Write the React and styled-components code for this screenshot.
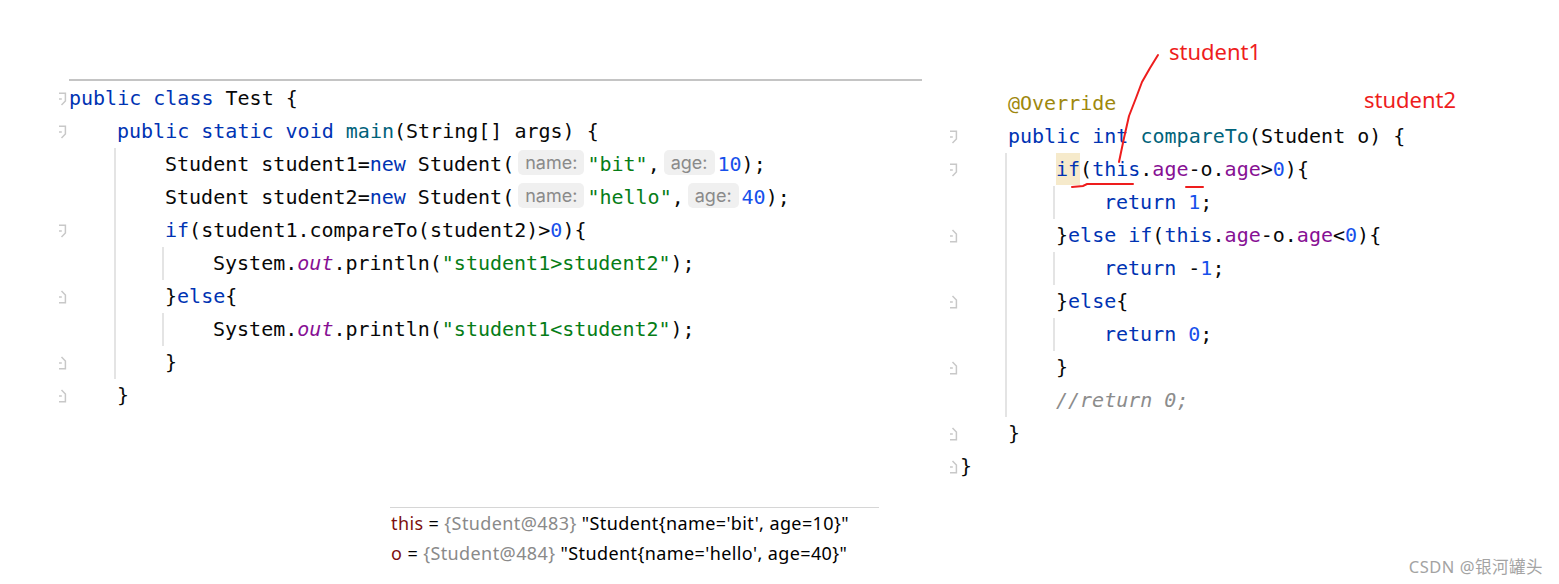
import React from 'react';
import styled, { createGlobalStyle } from 'styled-components';

const GlobalStyle = createGlobalStyle`
  html, body { margin: 0; padding: 0; background: #ffffff; }
`;

const Page = styled.div`
  position: relative;
  width: 1559px;
  height: 584px;
  overflow: hidden;
  background: #ffffff;
  display: flex;
  flex-direction: column;
`;

const TopRow = styled.div`
  display: flex;
  align-items: flex-start;
`;

const Panel = styled.div`
  display: flex;
  margin-left: ${p => p.$left}px;
  margin-top: ${p => p.$top}px;
`;

const Gutter = styled.div`
  width: 12px;
  display: flex;
  flex-direction: column;
  padding-top: ${p => p.$pad || 0}px;
`;

const GutterCell = styled.div`
  height: 33px;
  display: flex;
  align-items: center;
  justify-content: flex-end;
  padding-right: 2px;
`;

const CodeColumn = styled.div`
  width: ${p => p.$width ? `${p.$width}px` : 'auto'};
  border-top: ${p => p.$ruled ? '2px solid #c4c4c4' : 'none'};
  padding-top: ${p => p.$pad || 0}px;
  font-family: "DejaVu Sans Mono", "Liberation Mono", monospace;
  font-size: 20px;
  color: #080808;
`;

const Line = styled.div`
  height: 33px;
  line-height: 33px;
  white-space: pre;
`;

const Block = styled.div`
  ${p => p.$guide
    ? 'margin-left: -3px; border-left: 2px solid #e4e4e4; padding-left: 49px;'
    : 'padding-left: 48px;'}
`;

const Kw = styled.span`color: #0033b3;`;
const Fn = styled.span`color: #00627a;`;
const Str = styled.span`color: #067d17;`;
const Num = styled.span`color: #1750eb;`;
const Field = styled.span`
  color: #871094;
  font-style: ${p => p.$italic ? 'italic' : 'normal'};
`;
const Ann = styled.span`color: #9e880d;`;
const Comment = styled.span`
  color: #8c8c8c;
  font-style: italic;
`;

const Highlight = styled.span`
  display: inline-block;
  height: 32px;
  line-height: 32px;
  background: #f6eacb;
  color: #0033b3;
`;

const Hint = styled.span`
  display: inline-block;
  height: 25px;
  line-height: 25px;
  padding: 0 7px;
  margin: 0 3px 0 4px;
  border-radius: 5px;
  background: #f0f0f0;
  color: #8a8a8a;
  font-family: Inter, "Noto Sans", sans-serif;
  font-size: 18px;
  vertical-align: 2px;
`;

const BottomRow = styled.div`
  display: flex;
  align-items: flex-start;
`;

const DebugPopup = styled.div`
  margin-left: 390px;
  margin-top: 24px;
  width: 488px;
  border-top: 1px solid #d6d6d6;
  padding-left: 1px;
  font-family: "Noto Sans", "Liberation Sans", sans-serif;
  font-size: 18px;
  letter-spacing: 0.4px;
  color: #000000;
`;

const DebugRow = styled.div`
  height: 30px;
  line-height: 30px;
  white-space: pre;
`;

const VarName = styled.span`color: #7d0f0f;`;
const VarRef = styled.span`color: #8a8a8a;`;

const Watermark = styled.div`
  margin-left: auto;
  margin-right: 16px;
  margin-top: 74px;
  font-family: "Noto Sans", "Noto Sans CJK SC", sans-serif;
  font-size: 16.5px;
  letter-spacing: 0.5px;
  line-height: 20px;
  color: #a3a3a3;
`;

const Overlay = styled.svg`
  position: absolute;
  left: 0;
  top: 0;
  pointer-events: none;
`;

const Note = styled.div`
  position: absolute;
  left: ${p => p.$x}px;
  top: ${p => p.$y}px;
  font-family: "Noto Sans", "Liberation Sans", sans-serif;
  font-size: 22px;
  line-height: 26px;
  color: #ee1d1d;
`;

function FoldIcon({ kind }) {
  return (
    <svg width="9" height="14" viewBox="0 0 9 14" fill="none" stroke="#c8c8c8" strokeWidth="1.5">
      {kind === 's'
        ? <path d="M1 1.2 H7.4 V9 L3.5 13" />
        : <path d="M3.5 1 L7.4 5 V12.8 H1" />}
      <path d="M1 7 H3.8" />
    </svg>
  );
}

function GutterMarks({ marks, pad }) {
  return (
    <Gutter $pad={pad}>
      {marks.map((m, i) => (
        <GutterCell key={i}>{m && <FoldIcon kind={m} />}</GutterCell>
      ))}
    </Gutter>
  );
}

const leftMarks = ['s', 's', null, null, 's', null, 'e', null, 'e', 'e'];
const rightMarks = [null, 's', 's', null, 'e', null, 'e', null, 'e', null, 'e', 'e'];

function MainCode() {
  return (
    <Panel $left={57} $top={79}>
      <GutterMarks marks={leftMarks} pad={3} />
      <CodeColumn $width={853} $ruled $pad={1}>
        <Line><Kw>public class</Kw> Test {'{'}</Line>
        <Block>
          <Line><Kw>public static void</Kw> <Fn>main</Fn>(String[] args) {'{'}</Line>
          <Block $guide>
            <Line>Student student1=<Kw>new</Kw> Student(<Hint>name:</Hint><Str>"bit"</Str>,<Hint>age:</Hint><Num>10</Num>);</Line>
            <Line>Student student2=<Kw>new</Kw> Student(<Hint>name:</Hint><Str>"hello"</Str>,<Hint>age:</Hint><Num>40</Num>);</Line>
            <Line><Kw>if</Kw>(student1.compareTo(student2)&gt;<Num>0</Num>){'{'}</Line>
            <Block $guide>
              <Line>System.<Field $italic>out</Field>.println(<Str>"student1&gt;student2"</Str>);</Line>
            </Block>
            <Line>{'}'}<Kw>else</Kw>{'{'}</Line>
            <Block $guide>
              <Line>System.<Field $italic>out</Field>.println(<Str>"student1&lt;student2"</Str>);</Line>
            </Block>
            <Line>{'}'}</Line>
          </Block>
          <Line>{'}'}</Line>
        </Block>
      </CodeColumn>
    </Panel>
  );
}

function CompareCode() {
  return (
    <Panel $left={26} $top={87}>
      <GutterMarks marks={rightMarks} />
      <CodeColumn>
        <Block>
          <Line><Ann>@Override</Ann></Line>
          <Line><Kw>public int</Kw> <Fn>compareTo</Fn>(Student o) {'{'}</Line>
          <Block $guide>
            <Line><Highlight>if</Highlight>(<Kw>this</Kw>.<Field>age</Field>-o.<Field>age</Field>&gt;<Num>0</Num>){'{'}</Line>
            <Block $guide>
              <Line><Kw>return</Kw> <Num>1</Num>;</Line>
            </Block>
            <Line>{'}'}<Kw>else if</Kw>(<Kw>this</Kw>.<Field>age</Field>-o.<Field>age</Field>&lt;<Num>0</Num>){'{'}</Line>
            <Block $guide>
              <Line><Kw>return</Kw> -<Num>1</Num>;</Line>
            </Block>
            <Line>{'}'}<Kw>else</Kw>{'{'}</Line>
            <Block $guide>
              <Line><Kw>return</Kw> <Num>0</Num>;</Line>
            </Block>
            <Line>{'}'}</Line>
            <Line><Comment>//return 0;</Comment></Line>
          </Block>
          <Line>{'}'}</Line>
        </Block>
        <Line>{'}'}</Line>
      </CodeColumn>
    </Panel>
  );
}

export default function App() {
  return (
    <>
      <GlobalStyle />
      <Page>
        <TopRow>
          <MainCode />
          <CompareCode />
        </TopRow>
        <BottomRow>
          <DebugPopup>
            <DebugRow><VarName>this</VarName> = <VarRef>{'{Student@483}'}</VarRef> "Student{'{'}name='bit', age=10{'}'}"</DebugRow>
            <DebugRow><VarName>o</VarName> = <VarRef>{'{Student@484}'}</VarRef> "Student{'{'}name='hello', age=40{'}'}"</DebugRow>
          </DebugPopup>
          <Watermark>CSDN @银河罐头</Watermark>
        </BottomRow>
        <Note $x={1169} $y={38}>student1</Note>
        <Note $x={1364} $y={86}>student2</Note>
        <Overlay width="1559" height="584" viewBox="0 0 1559 584">
          <path
            d="M1158 55 L1150 68 L1142 82 L1136 98 L1129 116 L1124 138 L1119 162"
            fill="none" stroke="#ee1d1d" strokeWidth="2" strokeLinecap="round" strokeLinejoin="round"
          />
          <path d="M1072 187 L1083 186 L1087 184 L1133 184" fill="none" stroke="#ee1d1d" strokeWidth="2" strokeLinecap="round" />
          <path d="M1186 187 L1203 187" fill="none" stroke="#ee1d1d" strokeWidth="2" strokeLinecap="round" />
        </Overlay>
      </Page>
    </>
  );
}
